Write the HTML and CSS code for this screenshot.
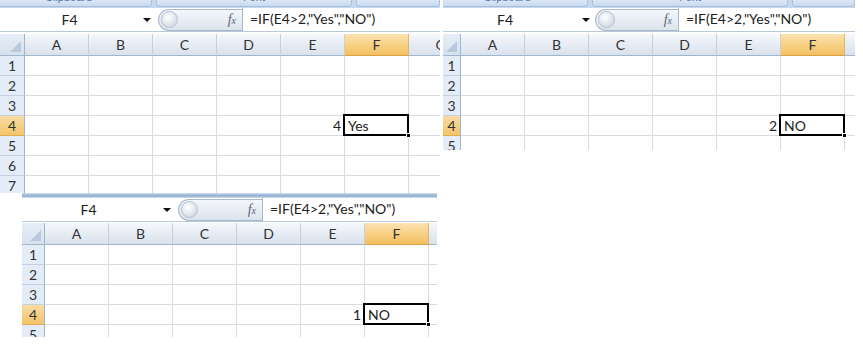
FILE: index.html
```html
<!DOCTYPE html>
<html lang="en">
<head>
    <meta charset="UTF-8">
    <meta name="viewport" content="width=device-width, initial-scale=1.0">
    <title>IF formula examples</title>
    <link rel="stylesheet" href="styles.css">
</head>
<body>
    <div class="canvas">
        <section class="shot shot-1">
            <div class="ribbon">
                <div class="group g1"><span>Clipboard</span></div>
                <div class="group g2"><span>Font</span></div>
                <div class="group g3"></div>
            </div>
            <div class="fbar">
                <div class="namebox">F4</div>
                <div class="nb-arrow"></div>
                <div class="fx-pill"><span class="grip"></span><span class="fx">f<sub>x</sub></span></div>
                <div class="formula">=IF(E4&gt;2,"Yes","NO")</div>
            </div>
            <div class="grid" data-rows="7" data-e4="4" data-f4="Yes"></div>
        </section>

        <section class="shot shot-2">
            <div class="ribbon">
                <div class="group g1"><span>Clipboard</span></div>
                <div class="group g2"><span>Font</span></div>
                <div class="group g3"></div>
            </div>
            <div class="fbar">
                <div class="namebox">F4</div>
                <div class="nb-arrow"></div>
                <div class="fx-pill"><span class="grip"></span><span class="fx">f<sub>x</sub></span></div>
                <div class="formula">=IF(E4&gt;2,"Yes","NO")</div>
            </div>
            <div class="grid" data-rows="5" data-e4="2" data-f4="NO"></div>
        </section>

        <section class="shot shot-3">
            <div class="ribbon"></div>
            <div class="fbar">
                <div class="namebox">F4</div>
                <div class="nb-arrow"></div>
                <div class="fx-pill"><span class="grip"></span><span class="fx">f<sub>x</sub></span></div>
                <div class="formula">=IF(E4&gt;2,"Yes","NO")</div>
            </div>
            <div class="grid" data-rows="5" data-e4="1" data-f4="NO"></div>
        </section>
    </div>

    <script>
        // Build the worksheet cells for each screenshot
        document.querySelectorAll('.grid').forEach(function(grid) {
            const rows = parseInt(grid.dataset.rows);
            const cols = ['A', 'B', 'C', 'D', 'E', 'F', 'G'];
            let html = '<div class="corner"></div>';

            cols.forEach(c => {
                html += `<div class="col-head${c === 'F' ? ' sel' : ''}">${c}</div>`;
            });

            for (let r = 1; r <= rows; r++) {
                html += `<div class="row-head${r === 4 ? ' sel' : ''}">${r}</div>`;
                cols.forEach(c => {
                    if (r === 4 && c === 'E') {
                        html += `<div class="cell num">${grid.dataset.e4}</div>`;
                    } else if (r === 4 && c === 'F') {
                        html += `<div class="cell active">${grid.dataset.f4}</div>`;
                    } else {
                        html += '<div class="cell"></div>';
                    }
                });
            }
            grid.innerHTML = html;
        });
    </script>
</body>
</html>
```

FILE: styles.css
```css
body {
    margin: 0;
    background-color: #fff;
    font-family: Lato, "Open Sans", sans-serif;
    color: #222;
}

.canvas {
    position: relative;
    width: 863px;
    height: 352px;
}

/* each cropped excel screenshot */
.shot {
    position: absolute;
    overflow: hidden;
    background-color: #fff;
}

.shot-1 {
    left: 0;
    top: 0;
    width: 440px;
    height: 193px;
    --rh: 25px;
    --nb: 143px;
    --nb-pr: 4px;
    --gap: 7px;
    --pill: 84px;
    --g1: 167px;
    --g1-off: -15px;
}

.shot-2 {
    left: 443px;
    top: 0;
    width: 412px;
    height: 150px;
    --rh: 18px;
    --nb: 139px;
    --nb-pr: 15px;
    --gap: 5px;
    --pill: 83px;
    --g1: 162px;
    --g1-off: -17px;
}

.shot-3 {
    left: 22px;
    top: 193px;
    width: 415px;
    height: 144px;
    --rh: 23px;
    --nb: 141px;
    --nb-pr: 8px;
    --gap: 7px;
    --pill: 84px;
}

/* bottom edge of the ribbon */
.ribbon {
    display: flex;
    gap: 4px;
    height: 8px;
    background-color: #c6d8ee;
}

.shot-3 .ribbon {
    height: 5px;
    background: linear-gradient(#d3e0f0, #9fb8d8 40%, #8fabd0 60%, #d8e4f2);
}

.group {
    box-sizing: border-box;
    height: 7px;
    border: 1px solid #a9bfdc;
    border-top: none;
    border-radius: 0 0 4px 4px;
    background: linear-gradient(#dbe7f5, #c9daef);
    overflow: hidden;
    text-align: center;
}

.group span {
    display: block;
    font-family: "Liberation Sans", sans-serif;
    font-size: 11px;
    line-height: 11px;
    margin-top: -8px;
    color: #4f73a8;
}

.g1 {
    width: var(--g1);
    margin-left: var(--g1-off);
}

.g2 {
    width: 196px;
}

.g3 {
    flex: 1;
}

/* formula bar */
.fbar {
    display: flex;
    align-items: center;
    height: 23px;
    border-bottom: 1px solid #b9c8db;
    background-color: #fff;
}

.namebox {
    box-sizing: border-box;
    width: var(--nb);
    padding-right: var(--nb-pr);
    text-align: center;
    font-size: 14px;
}

.nb-arrow {
    width: 0;
    height: 0;
    border-left: 4px solid transparent;
    border-right: 4px solid transparent;
    border-top: 4px solid #111;
    margin-right: var(--gap);
}

.fx-pill {
    box-sizing: border-box;
    display: flex;
    align-items: center;
    justify-content: space-between;
    width: var(--pill);
    height: 22px;
    border: 1px solid #a8b8cd;
    border-right: none;
    border-radius: 11px 0 0 11px;
    background: linear-gradient(#f4f7fb, #dbe3ec);
}

.grip {
    width: 15px;
    height: 15px;
    margin-left: 2px;
    border-radius: 50%;
    border: 1px solid #b4c1d2;
    background: radial-gradient(circle at 40% 35%, #ffffff, #dfe5ec 55%, #c4cdd9);
}

.fx {
    font-family: "Liberation Serif", serif;
    font-style: italic;
    font-size: 14px;
    color: #5a6578;
    margin-right: 6px;
}

.fx sub {
    font-size: 10px;
    vertical-align: 0;
}

.formula {
    flex: 1;
    height: 23px;
    border-left: 1px solid #a8b8cd;
    padding-left: 7px;
    line-height: 22px;
    font-size: 14px;
    white-space: nowrap;
}

/* worksheet */
.grid {
    display: grid;
    grid-template-columns: var(--rh) repeat(7, 64px);
    grid-template-rows: 22px;
    grid-auto-rows: 20px;
    margin-top: 2px;
}

.shot-3 .grid {
    margin-top: 1px;
}

.grid > div {
    box-sizing: border-box;
    font-size: 14px;
    white-space: nowrap;
}

.corner {
    position: relative;
    background: linear-gradient(#e6edf6, #d7e1ee);
    border-right: 1px solid #9eb6ce;
    border-bottom: 1px solid #9eb6ce;
}

.corner::after {
    content: "";
    position: absolute;
    right: 3px;
    bottom: 3px;
    border-left: 11px solid transparent;
    border-bottom: 11px solid #b9c9dd;
}

.col-head {
    background: linear-gradient(#f6f8fb, #e4eaf2 60%, #d9e1ec);
    border-right: 1px solid #c5d1df;
    border-bottom: 1px solid #9eb6ce;
    text-align: center;
    line-height: 21px;
    color: #333;
}

.col-head.sel {
    background: linear-gradient(#fbe3b2, #f7cf82 55%, #f3c063);
    border-right-color: #e8b45a;
    border-bottom-color: #d9a046;
}

.row-head {
    background-color: #e4ecf7;
    border-right: 1px solid #9eb6ce;
    border-bottom: 1px solid #c5d1df;
    text-align: center;
    line-height: 20px;
    color: #333;
}

.row-head.sel {
    background: linear-gradient(#f9dca4, #f4c468);
    border-bottom-color: #e0ad55;
}

.cell {
    border-right: 1px solid #d6dbe3;
    border-bottom: 1px solid #d6dbe3;
    line-height: 19px;
    padding: 0 3px;
}

.cell.num {
    text-align: right;
    padding-right: 3px;
}

.cell.active {
    position: relative;
}

.cell.active::before {
    content: "";
    position: absolute;
    top: -2px;
    left: -2px;
    right: -1px;
    bottom: -1px;
    border: 2px solid #000;
}

.cell.active::after {
    content: "";
    position: absolute;
    right: -3px;
    bottom: -3px;
    width: 5px;
    height: 5px;
    background-color: #000;
    border: 1px solid #fff;
    box-sizing: border-box;
}
```
